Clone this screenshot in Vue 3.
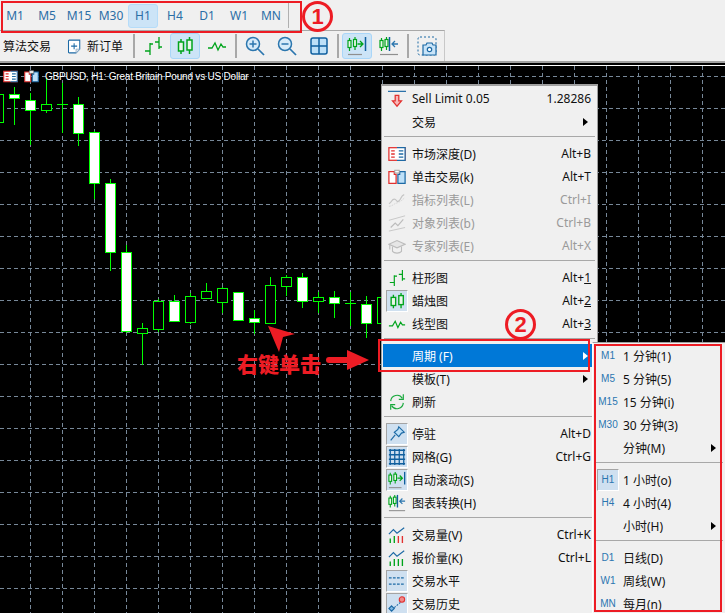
<script setup>
const timeframes = ['M1', 'M5', 'M15', 'M30', 'H1', 'H4', 'D1', 'W1', 'MN']

const vLines = Array.from({ length: 22 }, (_, i) => 30 + 32 * i)
const hLines = Array.from({ length: 17 }, (_, i) => 76 + 32 * i)

// x, high, body top, body bottom, low, filled (doji when top === bottom)
const candles = [
  [-2, 88, 94, 122, 130, 0], [14, 87, 94, 98, 125, 1], [30, 93, 100, 110, 145, 1],
  [46, 78, 104, 110, 113, 0], [62, 83, 104, 104, 133, 0], [78, 97, 104, 133, 146, 1],
  [94, 131, 132, 183, 199, 1], [110, 179, 183, 252, 271, 1], [126, 245, 252, 331, 333, 1],
  [142, 323, 328, 333, 365, 0], [158, 299, 301, 329, 332, 0], [174, 295, 301, 321, 322, 1],
  [190, 293, 296, 322, 324, 0], [206, 283, 291, 298, 298, 0], [222, 287, 288, 302, 313, 0],
  [238, 292, 292, 320, 320, 1], [254, 310, 318, 322, 334, 1], [270, 277, 285, 323, 324, 0],
  [286, 275, 277, 286, 296, 0], [302, 273, 277, 301, 308, 1], [318, 292, 297, 301, 313, 0],
  [334, 291, 297, 303, 318, 1], [350, 292, 303, 303, 326, 0], [366, 296, 304, 323, 338, 1],
  [382, 290, 297, 323, 330, 0]
]

const menu = [
  { label: 'Sell Limit 0.05', short: '1.28286', icon: 'sell' },
  { label: '交易', arrow: true },
  { sep: true },
  { label: '市场深度(D)', short: 'Alt+B', icon: 'mw' },
  { label: '单击交易(k)', short: 'Alt+T', icon: 'click' },
  { label: '指标列表(L)', short: 'Ctrl+I', icon: 'ind', off: true },
  { label: '对象列表(b)', short: 'Ctrl+B', icon: 'obj', off: true },
  { label: '专家列表(E)', short: 'Alt+X', icon: 'exp', off: true },
  { sep: true },
  { label: '柱形图', short: 'Alt+', u: '1', icon: 'bars' },
  { label: '蜡烛图', short: 'Alt+', u: '2', icon: 'candle', on: true },
  { label: '线型图', short: 'Alt+', u: '3', icon: 'line' },
  { sep: true },
  { label: '周期 (F)', arrow: true, hot: true },
  { label: '模板(T)', arrow: true },
  { label: '刷新', icon: 'refresh' },
  { sep: true },
  { label: '停驻', short: 'Alt+D', icon: 'pin', on: true },
  { label: '网格(G)', short: 'Ctrl+G', icon: 'mesh', on: true },
  { label: '自动滚动(S)', icon: 'auto', on: true },
  { label: '图表转换(H)', icon: 'shift' },
  { sep: true },
  { label: '交易量(V)', short: 'Ctrl+K', icon: 'vol' },
  { label: '报价量(K)', short: 'Ctrl+L', icon: 'tick' },
  { label: '交易水平', icon: 'levels', on: true },
  { label: '交易历史', icon: 'hist', on: true }
]

const submenu = [
  { tag: 'M1', label: '1 分钟(1)' },
  { tag: 'M5', label: '5 分钟(5)' },
  { tag: 'M15', label: '15 分钟(i)' },
  { tag: 'M30', label: '30 分钟(3)' },
  { label: '分钟(M)', arrow: true },
  { sep: true },
  { tag: 'H1', label: '1 小时(o)', on: true },
  { tag: 'H4', label: '4 小时(4)' },
  { label: '小时(H)', arrow: true },
  { sep: true },
  { tag: 'D1', label: '日线(D)' },
  { tag: 'W1', label: '周线(W)' },
  { tag: 'MN', label: '每月(n)' }
]
</script>

<template>
  <div class="app">
    <svg class="defs" aria-hidden="true">
      <symbol id="i-bars" viewBox="0 0 20 20">
        <path d="M7 7v12M2 15h5M7 8h3M16 1v12M12 6h4M16 11h3" fill="none" stroke="#00a41c" stroke-width="1.3" />
      </symbol>
      <symbol id="i-candle" viewBox="0 0 20 20">
        <path d="M6 3v15M14.500 1v17" stroke="#00a41c" stroke-width="1.5" />
        <rect x="3.500" y="6" width="5" height="9" fill="#eaf6ea" stroke="#00a41c" stroke-width="1.500" />
        <rect x="12" y="4" width="5" height="10" fill="#eaf6ea" stroke="#00a41c" stroke-width="1.500" />
      </symbol>
      <symbol id="i-line" viewBox="0 0 20 20">
        <path d="M1 12h4l3-5 3 7 3-6 2 3h3" fill="none" stroke="#00a41c" stroke-width="1.300" />
      </symbol>
      <symbol id="i-zin" viewBox="0 0 20 20">
        <circle cx="8" cy="8" r="6.500" fill="#d6ebf9" stroke="#2b76ae" stroke-width="1.500" />
        <path d="M8 4.500v7M4.500 8h7" stroke="#2b76ae" stroke-width="1.500" />
        <path d="M13 13l6 6" stroke="#2b76ae" stroke-width="1.700" />
      </symbol>
      <symbol id="i-zout" viewBox="0 0 20 20">
        <circle cx="8" cy="8" r="6.500" fill="#d6ebf9" stroke="#2b76ae" stroke-width="1.500" />
        <path d="M4.500 8h7" stroke="#2b76ae" stroke-width="1.500" />
        <path d="M13 13l6 6" stroke="#2b76ae" stroke-width="1.700" />
      </symbol>
      <symbol id="i-tile" viewBox="0 0 20 20">
        <rect x="2" y="2" width="16" height="16" rx="2" fill="#bde0f8" stroke="#0f5f9e" stroke-width="1.500" />
        <path d="M10 2v16M2 10h16" stroke="#0f5f9e" stroke-width="1.500" />
      </symbol>
      <symbol id="i-auto" viewBox="0 0 20 20">
        <path d="M2.500 2v13M8 1v13" stroke="#00a41c" stroke-width="1.200" />
        <rect x="1" y="4.500" width="3" height="7" fill="#eaf6ea" stroke="#00a41c" stroke-width="1.200" />
        <rect x="6.500" y="3.500" width="3" height="7" fill="#eaf6ea" stroke="#00a41c" stroke-width="1.200" />
        <path d="M10.500 8h5M13 5l3 3-3 3" fill="none" stroke="#00a41c" stroke-width="1.300" />
        <path d="M18.500 1v14" stroke="#0f5f9e" stroke-width="1.500" />
        <path d="M1 18.500h14" stroke="#8f8f8f" stroke-width="1.200" />
      </symbol>
      <symbol id="i-shift" viewBox="0 0 20 20">
        <path d="M2.500 2v13M7.500 1v13" stroke="#00a41c" stroke-width="1.200" />
        <rect x="1" y="4.500" width="3" height="7" fill="#eaf6ea" stroke="#00a41c" stroke-width="1.200" />
        <rect x="6" y="3.500" width="3" height="7" fill="#eaf6ea" stroke="#00a41c" stroke-width="1.200" />
        <path d="M10.500 1v14" stroke="#0f5f9e" stroke-width="1.500" />
        <path d="M19 8h-6M16 5l-3 3 3 3" fill="none" stroke="#2b76ae" stroke-width="1.300" />
        <path d="M1 18.500h18" stroke="#8f8f8f" stroke-width="1.200" />
      </symbol>
      <symbol id="i-cam" viewBox="0 0 20 20">
        <rect x="1" y="1" width="18" height="18" rx="2" fill="none" stroke="#1d6aa5" stroke-width="1" stroke-dasharray="2 2" />
        <path d="M6 19V9h3l1-2h5l1 2h3v10z" fill="#c9e4f8" stroke="#1d6aa5" stroke-width="1.200" />
        <circle cx="12.500" cy="13.500" r="2.200" fill="#fff" stroke="#1d6aa5" stroke-width="1.200" />
      </symbol>
      <symbol id="i-new" viewBox="0 0 20 20">
        <path d="M3 1.500h14v12l-5 5H3a1 1 0 0 1-1-1v-15a1 1 0 0 1 1-1z" fill="#fff" stroke="#1d6aa5" stroke-width="1.400" />
        <path d="M17 13.500h-5v5" fill="#dfe3e8" stroke="#8aa7c0" stroke-width="1" />
        <path d="M9.500 5.500v8M5.500 9.500h8" stroke="#1d6aa5" stroke-width="1.400" />
      </symbol>
      <symbol id="i-sell" viewBox="0 0 20 20">
        <path d="M0 1.500h20" stroke="#1d6aa5" stroke-width="1.300" />
        <path d="M8 6h4v6h3l-5 6-5-6h3z" fill="#f8b8b8" stroke="#e2312f" stroke-width="1.400" />
      </symbol>
      <symbol id="i-mw" viewBox="0 0 20 20">
        <rect x="1" y="3" width="18" height="14" fill="#fff" stroke="#e2312f" stroke-width="1.400" />
        <path d="M10 3h9v14h-9" fill="#fff" stroke="#1d6aa5" stroke-width="1.400" />
        <path d="M3.500 6.500h4M3.500 10h4M3.500 13.500h4" stroke="#e2312f" stroke-width="1.400" />
        <path d="M12 6.500h5M12 10h5M12 13.500h5" stroke="#1d6aa5" stroke-width="1.400" />
      </symbol>
      <symbol id="i-click" viewBox="0 0 20 20">
        <path d="M1 4h6v3h2v10H1z" fill="#fff" stroke="#e2312f" stroke-width="1.400" />
        <path d="M11 7h2V4h6v13h-8z" fill="#bde0f8" stroke="#1d6aa5" stroke-width="1.400" />
        <rect x="7.500" y="2.500" width="5" height="3" fill="#fff" stroke="#9a9a9a" stroke-width="1" />
      </symbol>
      <symbol id="i-ind" viewBox="0 0 20 20">
        <path d="M1 14c3-1 3-5 6-5s2 4 5 2 2-6 6-7" fill="none" stroke="#c4c4c4" stroke-width="1.300" />
        <path d="M1 17c3 0 5-2 7-3s5-1 10-6" fill="none" stroke="#d4d4d4" stroke-width="1" stroke-dasharray="2 1" />
      </symbol>
      <symbol id="i-obj" viewBox="0 0 20 20">
        <path d="M1 7L19 2M1 19l18-4" stroke="#c4c4c4" stroke-width="1" />
        <path d="M3 15l5-5 3 3 6-7" fill="none" stroke="#bcbcbc" stroke-width="1.300" />
      </symbol>
      <symbol id="i-exp" viewBox="0 0 20 20">
        <path d="M1 8l9-4 9 4-9 4z" fill="#e6e6e6" stroke="#bcbcbc" stroke-width="1.200" />
        <path d="M5 10.500V16c2 2.500 8 2.500 10 0v-5.500M2 9v5" fill="none" stroke="#bcbcbc" stroke-width="1.200" />
      </symbol>
      <symbol id="i-refresh" viewBox="0 0 20 20">
        <path d="M3 9a7 7 0 0 1 13-3M17 11a7 7 0 0 1-13 3" fill="none" stroke="#18a83c" stroke-width="1.300" />
        <path d="M17 1.500V7h-5M3 18.500V13h5" fill="none" stroke="#18a83c" stroke-width="1.300" />
      </symbol>
      <symbol id="i-pin" viewBox="0 0 20 20">
        <path d="M12 2l6 6-3 1-3 4-5-5 4-3z" fill="#bde0f8" stroke="#1d6aa5" stroke-width="1.300" />
        <path d="M8 11l-5 6" stroke="#1d6aa5" stroke-width="1.300" />
      </symbol>
      <symbol id="i-mesh" viewBox="0 0 20 20">
        <path d="M1 2.500h18M1 7.500h18M1 12.500h18M1 17.500h18M2.500 1v18M7.500 1v18M12.500 1v18M17.500 1v18" stroke="#0f5f9e" stroke-width="1.400" />
      </symbol>
      <symbol id="i-vol" viewBox="0 0 20 20">
        <path d="M1 9l5-5 4 4 8-6" fill="none" stroke="#1d6aa5" stroke-width="1.300" />
        <path d="M2.500 14v5M7 11v8" stroke="#00a41c" stroke-width="1.500" />
        <path d="M11.500 11v8M16 11v8" stroke="#e2312f" stroke-width="1.500" />
      </symbol>
      <symbol id="i-tick" viewBox="0 0 20 20">
        <path d="M1 9l5-5 4 4 8-6" fill="none" stroke="#1d6aa5" stroke-width="1.300" />
        <path d="M2.500 14v5M7 11v8M11.500 11v8M16 11v8" stroke="#00a41c" stroke-width="1.500" />
      </symbol>
      <symbol id="i-levels" viewBox="0 0 20 20">
        <path d="M1 6.500h18M1 13.500h18" stroke="#1d6aa5" stroke-width="1.300" stroke-dasharray="3 1.500" />
      </symbol>
      <symbol id="i-hist" viewBox="0 0 20 20">
        <path d="M7 14l7-6" stroke="#1d6aa5" stroke-width="1.200" stroke-dasharray="2 1.500" />
        <path d="M4 12l3 3-3 3-3-3z" fill="#7fb8e2" stroke="#1d6aa5" stroke-width="1.200" />
        <circle cx="15.500" cy="5" r="3" fill="#f08a8a" stroke="#e2312f" stroke-width="1.200" />
      </symbol>
    </svg>

    <header class="bars">
      <nav class="tf-bar">
        <span v-for="t in timeframes" :key="t" class="tf" :class="{ 'tf-on': t === 'H1' }">{{ t }}</span>
        <i class="tf-sep"></i>
      </nav>
      <div class="tool-bar">
        <span class="tb-text tb-algo">算法交易</span>
        <svg class="tb-new"><use href="#i-new" /></svg>
        <span class="tb-text tb-order">新订单</span>
        <i class="tb-sep"></i>
        <span class="tb"><svg class="ic"><use href="#i-bars" /></svg></span>
        <span class="tb tb-on"><svg class="ic"><use href="#i-candle" /></svg></span>
        <span class="tb"><svg class="ic"><use href="#i-line" /></svg></span>
        <i class="tb-sep"></i>
        <span class="tb"><svg class="ic"><use href="#i-zin" /></svg></span>
        <span class="tb"><svg class="ic"><use href="#i-zout" /></svg></span>
        <span class="tb"><svg class="ic"><use href="#i-tile" /></svg></span>
        <i class="tb-sep"></i>
        <span class="tb tb-on"><svg class="ic"><use href="#i-auto" /></svg></span>
        <span class="tb"><svg class="ic"><use href="#i-shift" /></svg></span>
        <i class="tb-sep"></i>
        <span class="tb"><svg class="ic"><use href="#i-cam" /></svg></span>
      </div>
    </header>
    <div class="rule"></div>

    <main class="chart">
      <svg class="plot" viewBox="0 63 725 550" width="725" height="550">
        <path d="M0 65.500H725" stroke="#fff" />
        <g stroke="#778899" stroke-dasharray="4 3">
          <path v-for="x in vLines" :key="'v' + x" :d="`M${x + 0.5} 66V613`" />
          <path v-for="y in hLines" :key="'h' + y" :d="`M0 ${y + 0.5}H725`" />
        </g>
        <g stroke="#00ff00" shape-rendering="crispEdges">
          <g v-for="c in candles" :key="c[0]">
            <path :d="`M${c[0] + 0.5} ${c[1]}V${c[4]}`" />
            <path v-if="c[2] === c[3]" :d="`M${c[0] - 5} ${c[2] + 0.5}H${c[0] + 6}`" />
            <rect v-else :x="c[0] - 4.5" :y="c[2] + 0.5" width="10" :height="c[3] - c[2]" :fill="c[5] ? '#fff' : '#000'" />
          </g>
        </g>
        <polygon points="268,326 295,334 283,337 279,352" fill="#ed1c24" />
        <path d="M329 360H350" stroke="#ed1c24" stroke-width="6" stroke-linecap="round" />
        <polygon points="347,350 369,360 347,370" fill="#ed1c24" />
      </svg>

      <div class="chart-title">
        <svg class="title-ic"><use href="#i-mw" /></svg>
        <svg class="title-ic"><use href="#i-click" /></svg>
        <span class="title-text">GBPUSD, H1: Great Britain Pound vs US Dollar</span>
      </div>
      <div class="note">右键单击</div>

      <div class="menu">
        <template v-for="(m, i) in menu" :key="i">
          <div v-if="m.sep" class="sep"></div>
          <div v-else class="row" :class="{ hot: m.hot, off: m.off }">
            <span class="mi" :class="{ 'mi-on': m.on }">
              <svg v-if="m.icon" class="mi-svg"><use :href="'#i-' + m.icon" /></svg>
            </span>
            <span class="lbl">{{ m.label }}</span>
            <span v-if="m.short" class="short">{{ m.short }}<u v-if="m.u">{{ m.u }}</u></span>
            <i v-if="m.arrow" class="arrow"></i>
          </div>
        </template>
      </div>

      <div class="submenu">
        <template v-for="(s, i) in submenu" :key="i">
          <div v-if="s.sep" class="sep"></div>
          <div v-else class="row sub-row">
            <span class="tag" :class="{ 'mi-on': s.on }">{{ s.tag }}</span>
            <span class="lbl">{{ s.label }}</span>
            <i v-if="s.arrow" class="arrow"></i>
          </div>
        </template>
      </div>
    </main>

    <div class="mark mark-tf"></div>
    <div class="mark mark-row"></div>
    <div class="mark mark-sub"></div>
    <div class="badge badge-1">1</div>
    <div class="badge badge-2">2</div>
  </div>
</template>

<style scoped>
.app {
  position: relative;
  width: 725px;
  height: 613px;
  overflow: hidden;
  background: #f0f0f0;
  color: #111;
  font-family: "Noto Sans", "Noto Sans CJK SC", sans-serif;
  font-size: 12px;
}
.defs { position: absolute; width: 0; height: 0; }

.tf-bar { display: flex; align-items: center; height: 30px; margin-left: -1px; }
.tf {
  box-sizing: border-box;
  width: 30px;
  height: 24px;
  margin: 1px 1px 0;
  line-height: 22px;
  text-align: center;
  color: #2b6ea6;
  border: 1px solid transparent;
  border-radius: 3px;
}
.tf-on { background: #cce4f7; border-color: #b5dcf9; }
.tf-sep { width: 1px; height: 26px; margin-left: 1px; background: #b0b0b0; }

.tool-bar {
  box-sizing: border-box;
  display: flex;
  align-items: center;
  width: 445px;
  height: 31px;
  padding-left: 3px;
  border-top: 1px solid #a8a8a8;
  border-right: 1px solid #c8c8c8;
}
.tb-text { white-space: nowrap; font-size: 12px; }
.tb-algo { width: 47px; margin-right: 17px; }
.tb-new { width: 15px; height: 17px; margin-right: 5px; }
.tb-order { width: 36px; }
.tb-sep { width: 2px; height: 24px; margin: 0 2px; background: #a8a8a8; flex: none; }
.tb-order + .tb-sep { margin-left: 10px; }
.tb {
  box-sizing: border-box;
  display: flex;
  align-items: center;
  justify-content: center;
  flex: none;
  width: 30px;
  height: 26px;
  margin: 0 1px;
  border: 1px solid transparent;
  border-radius: 3px;
}
.tb-on { background: #cce4f7; border-color: #a9d6f8; }
.ic { width: 20px; height: 20px; }

.rule { height: 2px; background: #a0a0a0; }

.chart { position: relative; height: 550px; background: #000; }
.plot { display: block; }

.chart-title {
  position: absolute;
  left: 3px;
  top: 6px;
  display: flex;
  align-items: center;
  height: 14px;
  color: #fff;
  font-family: "Liberation Sans", sans-serif;
  font-size: 10px;
  white-space: nowrap;
}
.title-text { letter-spacing: -0.2px; }
.title-ic { width: 15px; height: 15px; margin-right: 6px; }

.note {
  position: absolute;
  left: 237px;
  top: 288px;
  color: #ed1c24;
  font-size: 21px;
  font-weight: 900;
  line-height: 26px;
  white-space: nowrap;
}

.menu {
  position: absolute;
  left: 381px;
  top: 21px;
  box-sizing: border-box;
  width: 217px;
  padding-top: 1px;
  background: #f0f0f0;
  border: 1px solid #a0a0a0;
  border-top-width: 2px;
}
.row {
  display: flex;
  align-items: center;
  height: 23px;
  padding-right: 6px;
  white-space: nowrap;
}
.mi {
  box-sizing: border-box;
  display: flex;
  align-items: center;
  justify-content: center;
  flex: none;
  width: 22px;
  height: 22px;
  margin-left: 4px;
  margin-right: 4px;
}
.mi-on {
  background: #cfe0f0;
  border: 1px solid;
  border-color: #a4a4a4 #fff #fff #a4a4a4;
}
.mi-svg { width: 18px; height: 18px; }
.short { margin-left: auto; }
.arrow {
  flex: none;
  width: 0;
  height: 0;
  margin-left: auto;
  margin-right: 3px;
  border-left: 5px solid #000;
  border-top: 4px solid transparent;
  border-bottom: 4px solid transparent;
}
.off { color: #9a9a9a; }
.hot { margin: 0 3px 0 1px; background: #0078d7; color: #fff; padding-right: 3px; }
.hot .mi { margin-left: 3px; }
.hot .arrow { border-left-color: #fff; }
.sep {
  box-sizing: border-box;
  height: 9px;
  margin: 0 2px;
  padding-top: 3px;
  background-clip: content-box;
  background-color: #a8a8a8;
  border-bottom: 5px solid #f0f0f0;
}

.submenu {
  position: absolute;
  left: 592px;
  top: 279px;
  width: 133px;
  padding-top: 1px;
  box-sizing: border-box;
  height: 271px;
  background: #f0f0f0;
  border-top: 1px solid #a0a0a0;
  border-left: 1px solid #fff;
}
.sub-row { padding-left: 4px; }
.tag {
  box-sizing: border-box;
  flex: none;
  width: 22px;
  height: 22px;
  margin-right: 4px;
  line-height: 21px;
  text-align: center;
  color: #2b76b0;
  font-family: "Liberation Sans", sans-serif;
  font-size: 10px;
}
.tag.mi-on { line-height: 20px; }

.mark { position: absolute; box-sizing: border-box; border: 2px solid #ed1c24; }
.mark-tf { left: 1px; top: 1px; width: 301px; height: 32px; }
.mark-row { left: 378px; top: 339px; width: 212px; height: 33px; }
.mark-sub { left: 594px; top: 344px; width: 128px; height: 268px; }

.badge {
  position: absolute;
  box-sizing: border-box;
  width: 31px;
  height: 31px;
  border: 3px solid #ed1c24;
  border-radius: 50%;
  color: #ed1c24;
  font-family: "Liberation Sans", sans-serif;
  font-size: 22px;
  font-weight: 700;
  line-height: 25px;
  text-align: center;
}
.badge-1 { left: 302px; top: 1px; }
.badge-2 { left: 505px; top: 309px; }
</style>
